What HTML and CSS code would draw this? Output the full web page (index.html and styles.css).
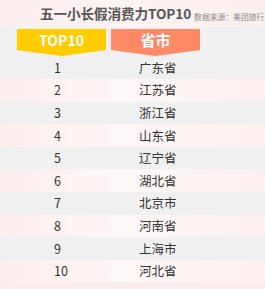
FILE: index.html
```html
<!DOCTYPE html>
<html lang="zh">
<head>
<meta charset="utf-8">
<link rel="stylesheet" href="styles.css">
</head>
<body>
<div class="page">
  <div class="title-bar">
    <h1 class="title">五一小长假消费力TOP10</h1>
    <span class="source">数据来源：美团旅行</span>
  </div>
  <div class="head">
    <div class="tab tab-top">TOP10</div>
    <div class="tab tab-city">省市</div>
  </div>
  <div class="rows">
    <div class="row odd"><span class="num">1</span><span class="city">广东省</span></div>
    <div class="row even"><span class="num">2</span><span class="city">江苏省</span></div>
    <div class="row odd"><span class="num">3</span><span class="city">浙江省</span></div>
    <div class="row even"><span class="num">4</span><span class="city">山东省</span></div>
    <div class="row odd"><span class="num">5</span><span class="city">辽宁省</span></div>
    <div class="row even"><span class="num">6</span><span class="city">湖北省</span></div>
    <div class="row odd"><span class="num">7</span><span class="city">北京市</span></div>
    <div class="row even"><span class="num">8</span><span class="city">河南省</span></div>
    <div class="row odd"><span class="num">9</span><span class="city">上海市</span></div>
    <div class="row even"><span class="num">10</span><span class="city">河北省</span></div>
  </div>
</div>
</body>
</html>
```
FILE: styles.css
```css
html, body {
  margin: 0;
  padding: 0;
  background: #f9eded;
}
.page {
  width: 265px;
  height: 289px;
  overflow: hidden;
  font-family: "Noto Sans CJK SC", "Noto Sans", sans-serif;
}
.title-bar {
  height: 27px;
  display: flex;
  align-items: flex-end;
  padding-left: 40px;
  box-sizing: border-box;
  white-space: nowrap;
  background: linear-gradient(90deg, #fbeeee 0%, #fdf3f3 50%, #fbeeee 100%);
}
.title {
  margin: 0 0 4px 0;
  font-size: 13.6px;
  line-height: 20px;
  font-weight: 700;
  color: #555;
  letter-spacing: -0.1px;
  white-space: nowrap;
}
.source {
  margin-left: 3px;
  margin-bottom: 5px;
  font-size: 7.8px;
  line-height: 10px;
  color: #8a8a8a;
  white-space: nowrap;
}
.head {
  background: #f0f0f0;
  padding-top: 2px;
  height: 29.5px;
  box-sizing: border-box;
  display: flex;
  gap: 5px;
  padding-left: 17px;
}
.tab {
  width: 89px;
  height: 27px;
  box-sizing: border-box;
  padding-bottom: 6px;
  display: flex;
  align-items: center;
  justify-content: center;
  color: #fff;
  font-weight: 700;
  clip-path: polygon(0 0, 100% 0, 100% 21px, 50% 27px, 0 21px);
}
.tab-top {
  background: #ffcc00;
  font-size: 14px;
}
.tab-city {
  background: #ff8866;
  font-size: 15px;
}
.row {
  height: 22.6px;
  display: flex;
  align-items: center;
  font-size: 12.5px;
  color: #333;
  padding-left: 54px;
  box-sizing: border-box;
}
.row.odd {
  background: #f0f0f0;
}
.row.even {
  background: linear-gradient(90deg, #fdeeee 0%, #fef7f7 45%, #fdf0f0 100%);
}
.num {
  width: 85px;
  line-height: 18px;
}
.city {
  line-height: 18px;
}
```
